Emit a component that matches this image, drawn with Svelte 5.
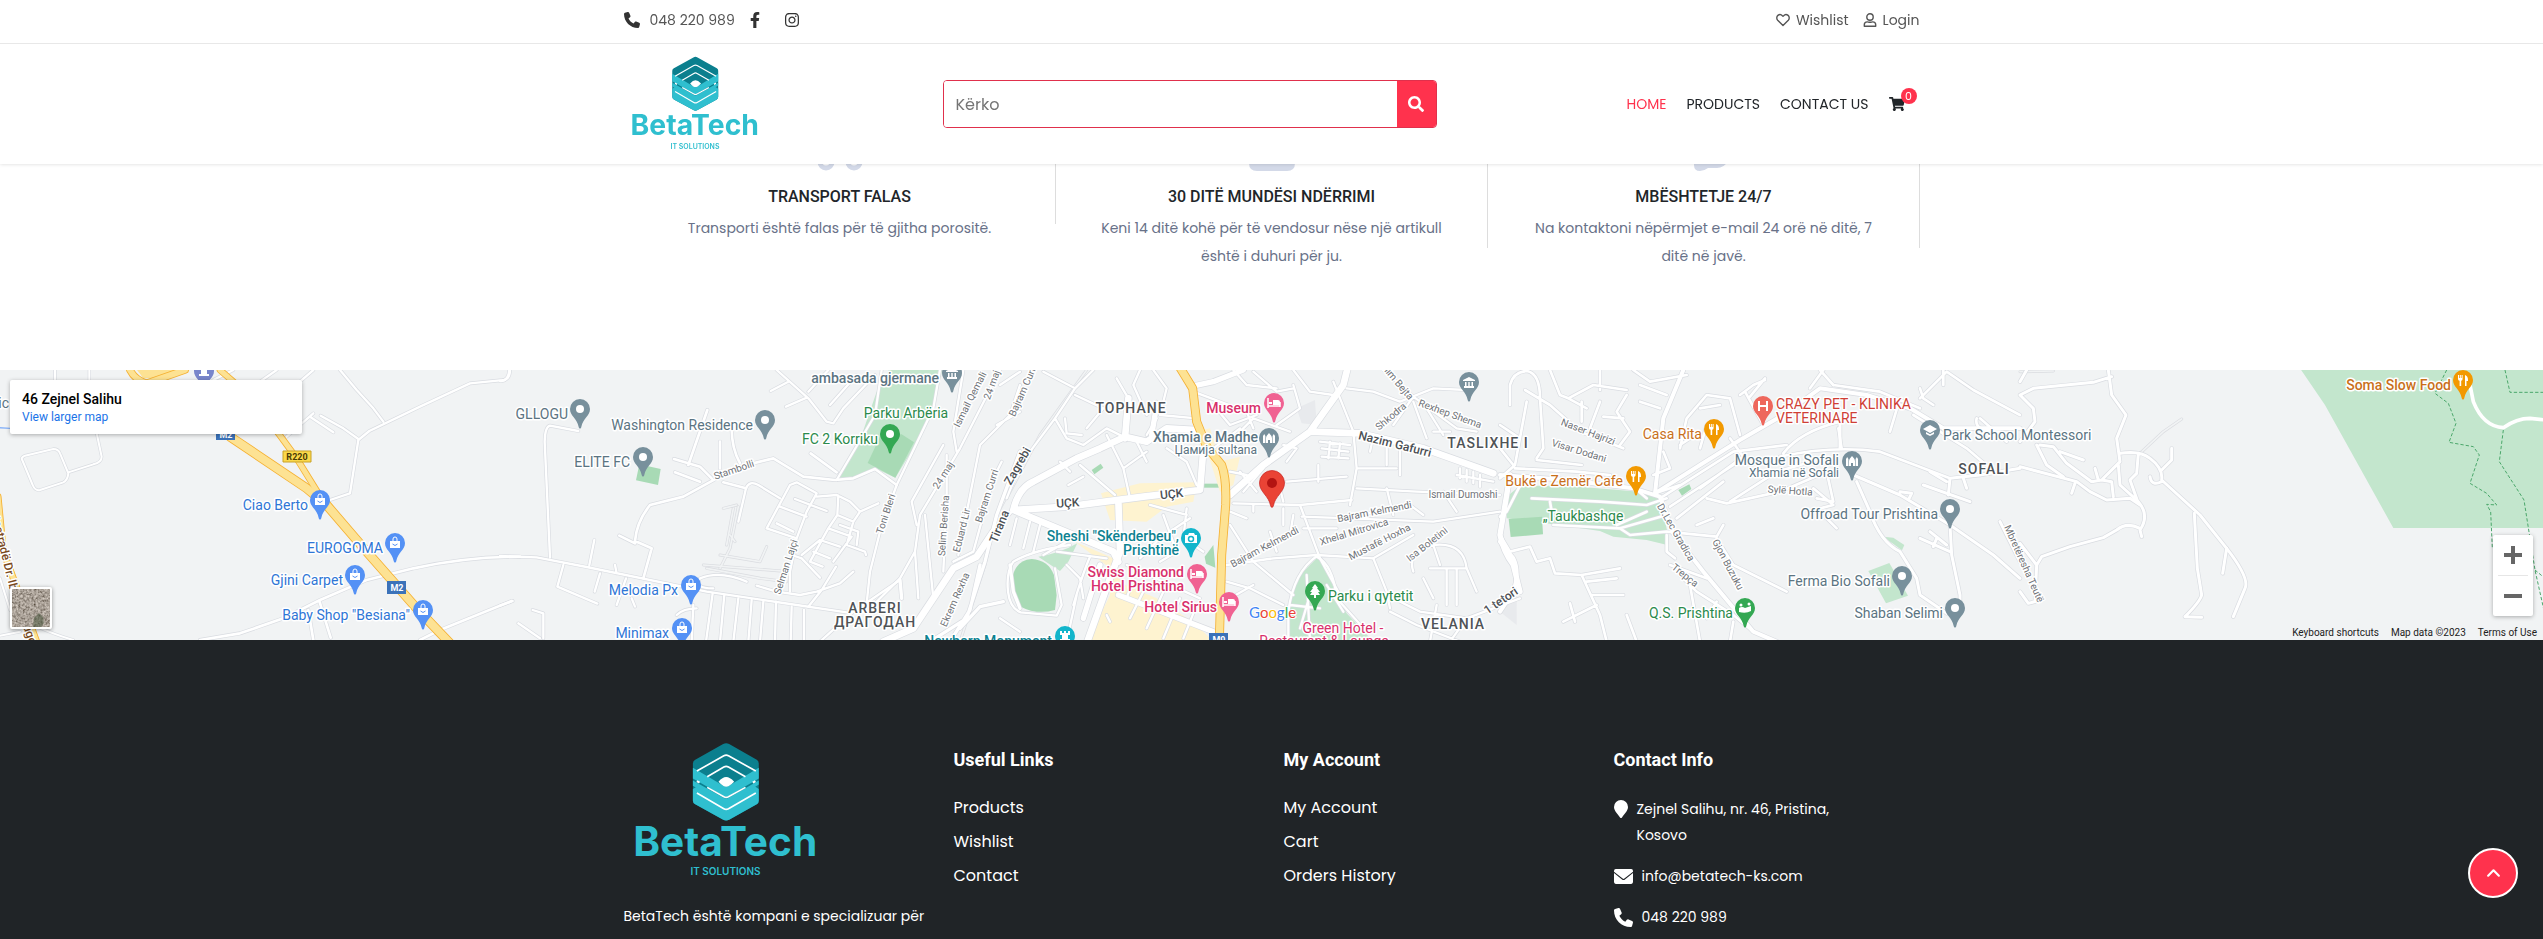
<script>
  const navLinks = ['HOME', 'PRODUCTS', 'CONTACT US'];

  const features = [
    { icon: 'truck', title: 'TRANSPORT FALAS', text: 'Transporti është falas për të gjitha porositë.' },
    { icon: 'calendar', title: '30 DITË MUNDËSI NDËRRIMI', text: 'Keni 14 ditë kohë për të vendosur nëse një artikull është i duhuri për ju.' },
    { icon: 'chat', title: 'MBËSHTETJE 24/7', text: 'Na kontaktoni nëpërmjet e-mail 24 orë në ditë, 7 ditë në javë.' }
  ];

  const linkColumns = [
    { title: 'Useful Links', links: ['Products', 'Wishlist', 'Contact'] },
    { title: 'My Account', links: ['My Account', 'Cart', 'Orders History'] }
  ];

  // Map sheets: each one is drawn at three units per pixel from its own left edge.
  const sheets = [0, 500, 1000, 1500, 2020];
  const place = (s) => `translate(${sheets[s]} -5) scale(0.33333)`;

  const areas = [
    { s: 1, fill: '#c3e6cd', d: 'M1175 0H1330L1306 110 1255 225 1186 338 1130 312 1060 338H1010L1075 240 1130 80z' },
    { s: 1, fill: '#a8dab5', d: 'M1140 215 1205 208 1242 232 1186 338 1103 294z' },
    { s: 1, fill: '#a8dab5', d: 'M418 298 482 312 474 360 408 346z' },
    { s: 2, fill: '#c3e6cd', d: 'M115 575Q180 565 232 535L205 590 180 618 160 605z' },
    { s: 2, fill: '#a8dab5', d: 'M95 582Q145 585 162 630L170 690 165 735Q110 750 62 725 30 700 36 640 48 584 95 582z' },
    { s: 2, fill: '#a8dab5', d: 'M275 315 302 296 310 308 283 328z' },
    { s: 2, fill: '#a8dab5', d: 'M608 356H664V368H608z' },
    { s: 2, fill: '#a8dab5', d: 'M614 575 640 540 646 608 618 596z' },
    { s: 2, fill: '#c3e6cd', d: 'M950 580Q990 600 1000 670L1040 745 1120 830H862L868 720 895 635z' },
    { s: 2, fill: '#fef3d0', d: 'M303 385 420 355 590 352 580 410 500 425 440 470 330 465z' },
    { s: 2, fill: '#fef3d0', d: 'M630 190 660 290 720 275 700 360 660 380 625 270 590 200z' },
    { s: 2, fill: '#fef3d0', d: 'M225 530 340 580 365 655 470 700 585 775 640 830H262L330 690 318 600z' },
    { s: 2, fill: '#e8eaed', d: 'M890 130 945 105 950 180 905 175z' },
    { s: 3, fill: '#c3e6cd', d: 'M20 395 60 362 200 362 420 380 480 400 502 500 502 540 440 525 340 515 300 498 160 478 20 460z' },
    { s: 3, fill: '#a8dab5', d: 'M26 462 126 455 129 508 32 516z' },
    { s: 3, fill: '#a8dab5', d: 'M535 375 568 358 574 372 546 392z' },
    { s: 3, fill: '#c3e6cd', d: 'M1150 515 1180 518 1213 540 1206 556z' },
    { s: 3, fill: '#c3e6cd', d: 'M1105 618 1168 594 1224 692 1158 715z' },
    { s: 3, fill: '#e8eaed', d: 'M0 725 50 690 50 780 0 740z' },
    { s: 4, fill: '#c3e6cd', d: 'M840 10 915 120 1120 489H1575V10z' },
    { s: 0, fill: '#fde293', d: 'M400 0H555L480 40H430z' }
  ];

  const roads = [
    { s: 0, w: 8, d: 'M165 15V45M268 15V45M290 205 305 275Q305 292 280 298L205 322M68 288Q60 278 75 272L160 252Q175 252 180 265L205 325Q203 345 190 352L120 375Q105 378 98 360zM0 640 30 735Q100 790 220 825M0 812 60 800' },
    { s: 0, w: 9, d: 'M1020 15 1070 75 1120 130 1150 170M1530 15Q1530 48 1500 46L1410 55 1260 125 1108 198 1075 225 1050 385 990 405M1075 222 1030 190 962 152M940 145 860 215M930 155 1000 202M780 50 830 15M900 50 940 15M640 45 700 15' },
    { s: 0, w: 10, d: 'M600 825 720 805 850 760 960 705 1100 645 1240 610Q1400 575 1560 575M925 735 940 825M958 708 992 818M1260 825 1320 795 1535 708' },
    { s: 1, w: 9, d: 'M0 48Q25 50 28 15M235 198 150 182Q135 185 134 230L150 577M0 573 110 577 260 606 620 680 850 714 1040 742M283 525 268 600M190 600 172 665 292 716M300 625 284 680M378 640 350 720M345 600 350 625M395 700 405 725M130 820V745L98 735M55 775 120 820M0 722 38 708' },
    { s: 1, w: 10, d: 'M430 640 455 550 405 528Q410 470 450 420L550 395 650 340 720 305 820 280 910 335 1005 345 1060 340 1125 312 1190 360M358 512 405 535M622 135 565 300M522 282 600 305 635 340M525 322 600 350M660 230V310M695 190Q695 250 720 295M932 265 1010 322M670 352 738 370' },
    { s: 1, w: 9, d: 'M640 670Q580 670 600 640 660 615 740 650M580 720 575 830M590 730Q550 730 530 750M638 685 618 830M673 690 660 830M715 700 700 830M755 705 745 830M790 710 780 830M828 710 825 830M875 725 872 830M912 735V830M770 662 830 680 900 690 950 680 1020 655 1060 620M925 725 965 675 1008 605M875 570 905 580 960 638' },
    { s: 1, w: 9, d: 'M715 470 738 370Q748 345 775 360L840 400M800 490 870 360 890 352 950 385 920 440 890 520 870 620V680M800 490 890 520M885 402 980 438M840 425 920 455M830 475 880 500M950 395 1010 390 1050 410 1080 440 1135 415M1015 392 1012 450 985 490 930 590 968 605M1012 450 1060 470 1080 440M985 490 1055 515 1000 590M960 525 1020 545M940 560 990 580M1060 470 1040 540 1095 560 1098 570M1020 480 1075 500 1070 540M905 570 960 525' },
    { s: 1, w: 9, d: 'M830 15 925 100 980 170 1000 175 1030 130 1125 30M812 78 865 50M858 125 920 98M925 80 985 15M990 120 1070 30M1010 345 1125 150 1145 15M1320 15 1300 130 1190 360 1140 500 1110 620 1100 715M1500 15 1380 250 1260 450 1245 560 1200 640 1120 720M1390 15 1360 200 1370 260M1330 240 1235 410 1250 480M1245 560 1255 700M1275 450 1300 700M1340 270V400L1330 620M1560 60 1530 150 1440 240 1375 570M1560 140 1490 180M1505 290 1480 340 1420 560 1360 590' },
    { s: 1, w: 22, d: 'M1150 830 1240 790 1360 610 1430 575 1480 500' },
    { s: 1, w: 9, d: 'M960 830 1060 740 1200 645' },
    { s: 1, w: 12, d: 'M1560 260 1490 450 1455 590 1400 760 1290 830M1200 645 1205 700M1440 600 1410 735 1350 830M1530 600 1540 680 1560 730M1510 710 1440 725 1380 790' },
    { s: 2, w: 9, d: 'M0 60 60 20M130 20 225 70 280 15M225 70 165 160 60 300 20 400M165 160 200 220 250 240 320 190 380 220M195 160 200 205 245 210M225 90 310 130 260 190M350 40 385 100 380 210M460 15 500 70 480 150 590 160M420 15 400 60 440 150 470 110M320 210 370 310 390 400M370 310 440 260M240 300 345 390M205 360 250 335M180 290 210 320M410 230 440 290M500 250 560 290 590 360M440 210 470 160' },
    { s: 2, w: 22, d: 'M40 435 200 425 430 395 600 375 612 230M355 405 360 560M40 435 340 560 355 590M385 100 375 220M40 435Q55 370 100 350L230 280 300 250 375 215 440 230 500 190 590 195M360 560 330 640 262 830M690 390 790 300 930 200 1080 205 1270 250 1480 325M930 200 1030 60 1045 0' },
    { s: 2, w: 18, d: 'M570 65 640 50 730 15M470 120 455 210M1530 330 1500 510Q1510 560 1540 600L1560 680M355 690 640 800M300 600 250 760' },
    { s: 2, w: 9, d: 'M0 480 40 435M50 460 30 540M90 470 70 550M120 480 100 560M210 540Q100 555 40 590 18 620 24 680 30 730 62 742L170 752 185 720 165 610M200 600 240 640 250 700M270 575Q250 620 220 720M130 570 200 530M170 560 320 580M380 600 600 700M420 580 480 520 570 460M450 420 560 450M490 450 530 560 480 590M560 430 550 520 610 560M400 640 380 700M440 660 390 760M490 680 440 790M540 700 490 820M590 720 550 820M230 690 200 830M320 750 330 770M0 760 60 800' },
    { s: 2, w: 9, d: 'M580 80 740 140 760 190M640 120 690 180 770 150M700 15 740 60 830 70M760 20 830 80 880 70M880 15 930 80 1000 90M830 180 900 130 880 60M690 230 760 160 870 200M640 250 720 190M690 320 740 330M860 290 890 250 850 240M790 310 730 380M860 350 1040 335M770 380 720 320M840 370 850 410M700 415 900 420 960 580 1020 690M690 440 740 460M760 420V440M900 420 1055 405M905 455 1050 460 1200 420M910 490 1010 490M690 480 760 590 880 690M680 600 820 580 950 570 1120 580 1240 510M680 650 750 670 850 720M690 700 760 660M850 430V480M880 450 870 510M810 500 830 560' },
    { s: 2, w: 9, d: 'M1000 50 1060 200 1070 310 1050 420M1070 310 1190 310M955 300V350M960 230 1050 240M965 250 1045 260M965 275 1045 280M990 230 985 280M1020 235 1015 280M1120 215 1110 260M1160 230V300M1200 240V330M1040 70 1120 80 1200 110 1300 70 1400 75M1150 15 1240 95 1180 180M1240 95 1370 190 1430 200M1240 110 1280 220M1280 130 1330 210M1300 200H1350M1070 370 1250 380 1500 390M1330 380 1370 440M1370 330 1480 350M1380 310V340M1400 315V350M1420 320V355M1440 330V365M1050 460 1300 470 1500 440M1180 450 1160 370M1230 420 1270 450' },
    { s: 2, w: 9, d: 'M955 570Q880 620 865 740V830M950 575Q1000 600 1010 700L1100 800M1120 580 1160 680 1170 730M1240 620Q1220 560 1300 540 1390 530 1400 610L1430 680M1290 610 1400 610M1300 540 1320 600M1270 640 1300 700M1340 610V720M1370 610V720M1180 700 1260 740 1400 760 1560 700M1170 740 1250 780 1380 830M1310 720 1290 830M1400 760 1350 830M920 630 930 830M870 720 960 730M930 690 900 790M980 660 1030 740' },
    { s: 3, w: 10, d: 'M30 120V60Q40 20 80 18 120 25 120 100L130 250 110 280M75 75 150 120 240 200 370 250M150 15 180 90 205 100 280 60 380 75M80 110 45 300 0 340M45 310 230 320 330 330M110 285 245 300M205 100 260 130M245 110V170M270 190 300 110M300 15V75M380 90 350 140 390 200 360 240M310 155 370 160M400 15 450 50 560 30M420 60 500 90M420 110 480 130M0 180 60 220M0 250 40 300' },
    { s: 3, w: 14, d: 'M550 15 490 160 465 385 600 300 720 225 850 150 960 70 1100 90 1230 130 1330 190 1560 190M0 330 200 345 400 370 480 395 520 505 610 620 760 800 830 830M0 530 40 580Q60 620 40 680L0 740' },
    { s: 3, w: 10, d: 'M690 220 730 275 600 370M465 385 540 360M480 400 700 260 860 240M510 425 700 300M530 460 670 350M490 260 510 310 460 330M540 250 560 160 620 90 690 100 720 210M600 130 660 120M600 250 620 180M540 240 570 220M750 95 795 40M720 90 760 60 795 45M735 80 790 180M930 70 970 15M850 265Q900 200 1020 170M1000 60 960 15M1015 190 1025 250M840 275Q1000 240 1140 260L1350 340' },
    { s: 3, w: 10, d: 'M620 400 680 415 840 380 980 320 1000 410 950 400M690 410 830 320 970 280M940 370 1000 420 960 430M980 460 1010 490M1000 60 1140 80 1260 130M1260 100 1340 20 1420 75 1560 150M1330 15V60M1260 70 1270 100 1300 120M1240 150 1400 250 1470 310M1200 100 1170 200M1430 160Q1420 200 1500 200M1440 160 1520 230' },
    { s: 3, w: 11, d: 'M1060 330 1200 390 1350 480 1480 570 1560 640M1070 350 1110 440Q1140 530 1200 560L1250 640 1260 690 1340 745M1350 480 1355 570 1380 690V740M1350 340 1345 390M1350 340 1440 330 1560 310M1270 360 1410 410M1290 320 1340 350M1390 340 1400 370M1260 520 1350 560M1290 500 1340 540M1310 520 1300 545M1200 380 1235 385 1225 405M1500 470 1560 590M1020 170V250' },
    { s: 3, w: 10, d: 'M160 480 360 490 500 450M95 400 300 410 440 420 500 400M60 362 20 440 0 455M150 410 155 440M400 365 440 400M360 490 390 510 500 500 650 515M350 480 440 440M590 480 640 460M650 515 670 480M500 510V560L525 580M0 510 30 560 90 545 110 590 150 580 165 625 245 630 360 610M260 650 350 640M275 690 370 690M245 630 300 750 320 830M190 770 290 720M210 715 225 770M380 750 410 830M650 520 700 600 860 680M510 600 620 640M570 660 600 830M540 630 590 680 700 750 760 800M700 770 690 830M650 710 620 760' },
    { s: 4, w: 11, d: 'M0 90 40 70 220 52 275 35M265 15 275 90 318 150 290 220 300 290 245 345 215 350M20 15 0 50M0 90 40 130 45 170 0 230M50 240 80 300 130 335M60 240 100 245 140 295 215 350M120 260 190 285M225 310 235 345M245 345 275 350 280 395M300 265Q360 255 390 280 430 310 425 345L540 450 620 550Q690 640 675 670L640 755M455 250V285L425 315M390 335Q395 365 425 350M355 265 350 325 330 345 355 415M295 300 300 360 355 410Q390 450 360 495L365 515' },
    { s: 4, w: 11, d: 'M0 305 170 350 210 380 260 405 330 400 360 420M165 355 155 385M360 490Q320 470 290 495L250 518 150 545 65 575 50 600 45 710 25 715 0 680M0 535 50 600M523 445 532 610 545 690Q540 710 495 755L545 757M620 550 608 625' }
  ];

  const faintRoads = [
    { s: 1, d: 'M715 425 690 550 660 610M670 430 710 420M700 430 680 540M610 600 870 620M660 570 780 590 800 545M690 510 705 530M620 610 780 640 860 650' },
    { s: 4, d: 'M360 265 430 200 485 162M0 20 100 18' },
    { s: 1, d: 'M1555 330 1490 450 1455 600 1380 830' },
    { s: 2, d: 'M260 15 120 210 20 400' }
  ];

  const highways = [
    { s: 0, w: 18, d: 'M390 15Q405 45 440 55L555 15' },
    { s: 0, w: 15, d: 'M660 15 780 120 835 205 890 280 955 385' },
    { s: 0, w: 24, d: 'M560 120 690 215 920 370 980 420 1100 560 1250 730 1350 835' },
    { s: 0, w: 16, d: 'M-6 395 10 560 55 680 110 830' },
    { s: 2, w: 22, d: 'M535 0 578 70 590 170 620 245 665 300Q680 340 677 420L665 570 658 830' }
  ];

  const blue = '#2f76d6', grey = '#5b7482', green = '#2b8a4c', pink = '#d8316c', orange = '#c9701b';

  // x, y: pin centre. tx, ty: label baseline position.
  const pins = [
    { s: 0, x: 961, y: 406, fill: '#5491f5', g: 'bag', label: 'Ciao Berto', tx: 923, ty: 436, c: blue },
    { s: 0, x: 1186, y: 535, fill: '#5491f5', g: 'bag', label: 'EUROGOMA', tx: 1148, ty: 565, c: blue },
    { s: 0, x: 1066, y: 630, fill: '#5491f5', g: 'bag', label: 'Gjini Carpet', tx: 1029, ty: 661, c: blue },
    { s: 0, x: 1268, y: 736, fill: '#5491f5', g: 'bag', label: 'Baby Shop "Besiana"', tx: 1230, ty: 766, c: blue },
    { s: 0, x: 613, y: 18, fill: '#7986cb', g: 'castle' },
    { s: 1, x: 241, y: 132, fill: '#78909c', g: 'dot', label: 'GLLOGU', tx: 203, ty: 163, c: grey },
    { s: 1, x: 430, y: 276, fill: '#78909c', g: 'dot', label: 'ELITE FC', tx: 391, ty: 306, c: grey },
    { s: 1, x: 796, y: 165, fill: '#78909c', g: 'dot', label: 'Washington Residence', tx: 759, ty: 196, c: grey },
    { s: 1, x: 1355, y: 24, fill: '#78909c', g: 'museum', label: 'ambasada gjermane', tx: 1316, ty: 55, c: grey, b: 1 },
    { s: 1, x: 1171, y: 208, fill: '#34a853', g: 'dot', label: 'FC 2 Korriku', tx: 1133, ty: 238, c: green },
    { s: 1, x: 574, y: 660, fill: '#5491f5', g: 'bag', label: 'Melodia Px', tx: 535, ty: 690, c: blue },
    { s: 1, x: 547, y: 789, fill: '#5491f5', g: 'bag', label: 'Minimax', tx: 508, ty: 820, c: blue },
    { s: 2, x: 823, y: 114, fill: '#f06292', g: 'bed', label: 'Museum', tx: 783, ty: 144, c: pink, b: 1 },
    { s: 2, x: 808, y: 219, fill: '#78909c', g: 'mosque', label: 'Xhamia e Madhe', tx: 774, ty: 231, c: grey, b: 1 },
    { s: 2, x: 574, y: 519, fill: '#12b5cb', g: 'camera', label: 'Sheshi "Skënderbeu",', tx: 536, ty: 528, c: '#0d8291', b: 1 },
    { s: 2, x: 592, y: 627, fill: '#f06292', g: 'bed', label: 'Swiss Diamond', tx: 552, ty: 637, c: pink, b: 1 },
    { s: 2, x: 688, y: 711, fill: '#f06292', g: 'bed', label: 'Hotel Sirius', tx: 652, ty: 741, c: pink, b: 1 },
    { s: 2, x: 196, y: 813, fill: '#12b5cb', g: 'castle', label: 'Newborn Monument', tx: 157, ty: 843, c: '#0d8291', b: 1 },
    { s: 2, x: 946, y: 678, fill: '#34a853', g: 'tree', label: 'Parku i qytetit', tx: 985, ty: 709, c: green, a: 'start' },
    { s: 2, x: 1408, y: 51, fill: '#78909c', g: 'museum' },
    { s: 3, x: 643, y: 192, fill: '#f29900', g: 'fork', label: 'Casa Rita', tx: 606, ty: 223, c: orange },
    { s: 3, x: 409, y: 333, fill: '#f29900', g: 'fork', label: 'Bukë e Zemër Cafe', tx: 369, ty: 364, c: orange },
    { s: 3, x: 790, y: 123, fill: '#ee675c', g: 'hospital', label: 'CRAZY PET - KLINIKA', tx: 829, ty: 132, c: '#cf3f36', a: 'start' },
    { s: 3, x: 1291, y: 195, fill: '#78909c', g: 'school', label: 'Park School Montessori', tx: 1329, ty: 225, c: grey, a: 'start' },
    { s: 3, x: 1057, y: 288, fill: '#78909c', g: 'mosque', label: 'Mosque in Sofali', tx: 1018, ty: 300, c: grey },
    { s: 3, x: 1351, y: 432, fill: '#78909c', g: 'dot', label: 'Offroad Tour Prishtina', tx: 1314, ty: 462, c: grey },
    { s: 3, x: 1207, y: 633, fill: '#78909c', g: 'dot', label: 'Ferma Bio Sofali', tx: 1169, ty: 664, c: grey },
    { s: 3, x: 1366, y: 729, fill: '#78909c', g: 'dot', label: 'Shaban Selimi', tx: 1329, ty: 760, c: grey },
    { s: 3, x: 736, y: 729, fill: '#34a853', g: 'golf', label: 'Q.S. Prishtina', tx: 698, ty: 760, c: green },
    { s: 4, x: 1329, y: 45, fill: '#f29900', g: 'fork', label: 'Soma Slow Food', tx: 1292, ty: 76, c: orange, b: 1 }
  ];

  const labels = [
    { s: 0, x: 28, y: 130, t: 'ic', c: grey, a: 'end' },
    { s: 1, x: 1218, y: 160, t: 'Parku Arbëria', c: green },
    { s: 2, x: 772, y: 267, t: 'Џамија sultana', c: grey, z: 12, a: 'end' },
    { s: 2, x: 536, y: 570, t: 'Prishtinë', c: '#0d8291', b: 1, a: 'end' },
    { s: 2, x: 552, y: 679, t: 'Hotel Prishtina', c: pink, b: 1, a: 'end' },
    { s: 2, x: 1028, y: 804, t: 'Green Hotel -', c: pink },
    { s: 2, x: 972, y: 844, t: 'Restaurant & Lounge', c: pink },
    { s: 3, x: 829, y: 174, t: 'VETERINARE', c: '#cf3f36', a: 'start' },
    { s: 3, x: 1018, y: 336, t: 'Xhamia në Sofali', c: grey, z: 12, a: 'end' },
    { s: 3, x: 249, y: 468, t: '„Taukbashqe', c: green }
  ];

  const districts = [
    { s: 2, x: 392, y: 144, t: 'TOPHANE' },
    { s: 2, x: 1463, y: 248, t: 'TASLIXHE I' },
    { s: 2, x: 1359, y: 792, t: 'VELANIA' },
    { s: 3, x: 1452, y: 327, t: 'SOFALI' },
    { s: 1, x: 1124, y: 744, t: 'ARBERI' },
    { s: 1, x: 1126, y: 786, t: 'ДРАГОДАН' }
  ];

  const streets = [
    { s: 0, x: 10, y: 590, r: 76, t: 'Autostradë Dr. Ibrahim', z: 12, c: '#7a4a1c' },
    { s: 0, x: 80, y: 820, r: 70, t: 'Rugova', z: 12, c: '#7a4a1c' },
    { s: 1, x: 705, y: 325, r: -19, t: 'Stambolli' },
    { s: 1, x: 868, y: 608, r: -72, t: 'Selman Lajçi' },
    { s: 1, x: 1168, y: 450, r: -72, t: 'Toni Bleri' },
    { s: 1, x: 1418, y: 108, r: -63, t: 'Ismail Qemali' },
    { s: 1, x: 1486, y: 62, r: -70, t: '24 maj' },
    { s: 1, x: 1338, y: 335, r: -58, t: '24 maj' },
    { s: 1, x: 1340, y: 482, r: -86, t: 'Selim Berisha' },
    { s: 1, x: 1394, y: 497, r: -76, t: 'Eduard Lir' },
    { s: 1, x: 1469, y: 397, r: -72, t: 'Bajram Curri' },
    { s: 1, x: 1374, y: 708, r: -66, t: 'Ekrem Rexha' },
    { s: 1, x: 1510, y: 488, r: -68, t: 'Tirana', z: 12, c: '#4b4f54' },
    { s: 2, x: 64, y: 308, r: -60, t: 'Zagrebi', z: 12, c: '#4b4f54' },
    { s: 2, x: 78, y: 82, r: -66, t: 'Bajram Curri' },
    { s: 2, x: 205, y: 427, r: -4, t: 'UÇK', z: 12, c: '#4b4f54' },
    { s: 2, x: 516, y: 400, r: -6, t: 'UÇK', z: 12, c: '#4b4f54' },
    { s: 2, x: 799, y: 554, r: -28, t: 'Bajram Kelmendi' },
    { s: 2, x: 1125, y: 450, r: -11, t: 'Bajram Kelmendi' },
    { s: 2, x: 1066, y: 510, r: -17, t: 'Xhelal Mitrovica' },
    { s: 2, x: 1142, y: 540, r: -27, t: 'Mustafë Hoxha' },
    { s: 2, x: 1288, y: 546, r: -38, t: 'Isa Boletini' },
    { s: 2, x: 1390, y: 398, r: 0, t: 'Ismail Dumoshi' },
    { s: 2, x: 1182, y: 250, r: 14, t: 'Nazim Gafurri', z: 12, c: '#4b4f54' },
    { s: 2, x: 1178, y: 162, r: -40, t: 'Shkodra' },
    { s: 2, x: 1348, y: 156, r: 20, t: 'Rexhep Shema' },
    { s: 2, x: 1170, y: 40, r: 50, t: 'Ibrahim Bejta' },
    { s: 2, x: 1508, y: 716, r: -34, t: '1 tetori', z: 12, c: '#4b4f54' },
    { s: 3, x: 262, y: 210, r: 21, t: 'Naser Hajrizi' },
    { s: 3, x: 234, y: 268, r: 17, t: 'Visar Dodani' },
    { s: 3, x: 870, y: 388, r: 4, t: 'Sylë Hotla' },
    { s: 3, x: 520, y: 508, r: 60, t: 'Dr.Lec Gradica' },
    { s: 3, x: 674, y: 604, r: 62, t: 'Gjon Buzuku' },
    { s: 3, x: 550, y: 640, r: 38, t: 'Trepça' },
    { s: 3, x: 1562, y: 600, r: 66, t: 'Mbretëresha Teutë' }
  ];

  const X = (o) => Math.round(sheets[o.s] + (o.tx ?? o.x) / 3);
  const Y = (o) => Math.round((o.ty ?? o.y) / 3 - 5);
  const pinAt = (p) => `translate(${Math.round(sheets[p.s] + p.x / 3)} ${Math.round(p.y / 3 - 5)})`;

  let term = $state('');
</script>

{#snippet logo()}
  <svg class="logo" viewBox="0 0 550 405" role="img" aria-label="BetaTech IT Solutions">
    <g transform="translate(-100 -65)">
      <path fill="#0b7f8e" d="M368 71q9-5 18 0l83 47q6 4 6 11v112q0 7-6 11l-83 46q-9 5-18 0l-84-46q-7-4-7-11V129q0-7 7-11z" />
      <path fill="#2fbfcf" d="M277 142l92 54q8 5 16 0l90-54v32l-90 53q-8 5-16 0l-92-53z" />
      <path fill="#2fbfcf" d="M277 206l20-12 80 45 80-45 18 12v35q0 7-6 11l-83 46q-9 5-18 0l-84-46q-7-4-7-11z" />
      <path fill="#2fbfcf" d="M277 180l92 52q8 5 16 0l90-52v12l-90 60q-8 5-16 0l-92-56z" />
      <path fill="#fff" d="M354 184q12-14 23-14t24 14q-10 10-16 13-8 4-16 0-6-3-15-13z" />
      <path fill="none" stroke="#fff" stroke-width="5" d="M289 152l81-46q7-4 14 0l82 46M320 169l50-29q7-4 14 0l51 29M320 201l50 28q7 4 14 0l51-28M289 218l81 47q7 4 14 0l82-47" />
      <path fill="none" stroke="#fff" stroke-width="6" d="M289 182l8 5M457 187l8-5" />
      <text x="374" y="407" text-anchor="middle" font-size="122" font-weight="700" fill="#2fbfcf">BetaTech</text>
      <text x="375" y="465" text-anchor="middle" font-size="30" font-weight="600" fill="#2fbfcf">IT SOLUTIONS</text>
    </g>
  </svg>
{/snippet}

{#snippet phone(cls)}
  <svg class={cls} viewBox="0 0 512 512" aria-hidden="true"><path fill="currentColor" d="M164.9 24.6c-7.7-18.6-28-28.5-47.4-23.2l-88 24C12.1 30.2 0 46 0 64C0 311.4 200.6 512 448 512c18 0 33.8-12.1 38.6-29.5l24-88c5.3-19.4-4.6-39.7-23.2-47.4l-96-40c-16.3-6.8-35.2-2.1-46.3 11.6L304.7 368C234.3 334.7 177.3 277.7 144 207.3L193.3 167c13.7-11.2 18.4-30 11.6-46.3l-40-96z" /></svg>
{/snippet}

{#snippet glyph(g)}
  {#if g === 'dot'}
    <circle r="4" fill="#fff" />
  {:else if g === 'bag'}
    <path fill="#fff" d="M-5-2H5V5H-5z" /><path fill="none" stroke="#fff" d="M-2-2v-2a2 2 0 0 1 4 0v2" /><path fill="none" stroke="#5491f5" d="M-2.500 1q2.500 3 5 0" />
  {:else if g === 'bed'}
    <path fill="none" stroke="#fff" stroke-width="1.500" d="M-6-5v10M-6 3h12M6 4V-1" /><path fill="#fff" d="M-1-3h5q2 0 2 2v3h-7zM-5-1h3v2h-3z" />
  {:else if g === 'museum'}
    <path fill="#fff" d="M-6-2 0-5 6-2v1H-6zM-5 4H5v2H-5zM-4 0h1.500v4H-4zM-.7 0H.7v4H-.7zM2.500 0H4v4H2.500z" />
  {:else if g === 'mosque'}
    <path fill="#fff" d="M-6 5v-7l1.200-2 1.200 2v7zM3.600 5v-7l1.200-2 1.200 2v7zM-3 5V0q0-2 3-5 3 3 3 5v5H1V2h-2v3z" />
  {:else if g === 'fork'}
    <path fill="#fff" d="M-5-5h1v3h.8v-3h1v3h.8v-3h1v4q0 1.500-1.400 1.800V6h-1.600V.8Q-5 .5-5-1zM2 6V-5q3 1 3 5v1H3.500v5z" />
  {:else if g === 'tree'}
    <path fill="#fff" d="M0-7 3-3H2L5 1H3l2 3H1v3h-2V4h-4l2-3h-2l3-4h-1z" />
  {:else if g === 'hospital'}
    <path fill="none" stroke="#fff" stroke-width="2" d="M-4-5V5M4-5V5M-4 0H4" />
  {:else if g === 'school'}
    <path fill="#fff" d="M-7-1 0-5 7-1 0 3zM-4 2l4 2.300L4 2v2L0 6-4 4z" />
  {:else if g === 'camera'}
    <path fill="#fff" d="M-6-3h3l1-2h5l1 2h2v8H-6z" /><circle cy="1" r="2.500" fill="none" stroke="#12b5cb" stroke-width="1.500" />
  {:else if g === 'golf'}
    <circle cx="-4" cy="-3" r="1.500" fill="#fff" /><circle cx="4" cy="-4" r="1.500" fill="#fff" /><path fill="#fff" d="M-6 0q3-2 6 0l6-2v5q-5 3-12 1z" />
  {:else}
    <path fill="#fff" d="M-5-5h2v2h2v-2h2v2h2v-2h2v4H3v4h2v2H-5V3h2v-4h-2z" />
  {/if}
{/snippet}

<header class="site-header">
  <div class="top-bar">
    <div class="container row">
      <div class="contact">
        <a class="call" href="#call">{@render phone('i16')}<span>048 220 989</span></a>
        <a href="#facebook" aria-label="Facebook"><svg class="fb" viewBox="0 0 320 512"><path fill="currentColor" d="M279.140 288l14.220-92.660h-88.910v-60.130c0-25.350 12.420-50.060 52.240-50.060h40.420V6.260S260.430 0 225.360 0c-73.220 0-121.080 44.380-121.080 124.720v70.620H22.890V288h81.390v224h100.170V288z" /></svg></a>
        <a class="insta" href="#instagram" aria-label="Instagram"><svg class="i16" viewBox="0 0 448 512"><path fill="currentColor" d="M224.100 141c-63.600 0-114.900 51.300-114.900 114.900s51.300 114.900 114.900 114.900S339 319.500 339 255.900 287.700 141 224.100 141zm0 189.600c-41.100 0-74.700-33.500-74.700-74.700s33.500-74.700 74.700-74.700 74.700 33.500 74.700 74.700-33.600 74.700-74.700 74.700zm146.400-194.300c0 14.900-12 26.800-26.800 26.800-14.900 0-26.800-12-26.800-26.800s12-26.800 26.800-26.800 26.800 12 26.800 26.800zm76.100 27.200c-1.700-35.900-9.900-67.700-36.200-93.900-26.200-26.200-58-34.400-93.900-36.200-37-2.100-147.900-2.100-184.900 0-35.800 1.700-67.600 9.900-93.900 36.100s-34.400 58-36.200 93.900c-2.100 37-2.100 147.900 0 184.900 1.700 35.900 9.900 67.700 36.200 93.900s58 34.400 93.900 36.200c37 2.100 147.900 2.100 184.900 0 35.900-1.700 67.700-9.900 93.900-36.200 26.200-26.200 34.400-58 36.200-93.900 2.100-37 2.100-147.800 0-184.800zM398.800 388c-7.800 19.600-22.900 34.700-42.600 42.600-29.500 11.700-99.500 9-132.100 9s-102.700 2.600-132.100-9c-19.600-7.800-34.700-22.900-42.600-42.600-11.700-29.500-9-99.500-9-132.100s-2.600-102.700 9-132.100c7.800-19.600 22.900-34.700 42.600-42.600 29.500-11.700 99.500-9 132.100-9s102.700-2.600 132.100 9c19.600 7.800 34.700 22.900 42.600 42.600 11.700 29.500 9 99.500 9 132.100s2.700 102.700-9 132.100z" /></svg></a>
      </div>
      <div class="account">
        <a href="#wishlist"><svg class="i14" viewBox="0 0 14 14" aria-hidden="true"><path fill="none" stroke="currentColor" stroke-width="1.400" stroke-linejoin="round" d="M7 12.500 1.700 7.200C.4 5.800.5 3.600 1.900 2.400 3.300 1.200 5.200 1.400 6.400 2.700L7 3.300l.6-.6C8.800 1.400 10.700 1.200 12.100 2.400c1.400 1.200 1.500 3.400.2 4.800z" /></svg>Wishlist</a>
        <a href="#login"><svg class="i14" viewBox="0 0 14 14" aria-hidden="true"><g fill="none" stroke="currentColor" stroke-width="1.400"><circle cx="7" cy="4" r="3.200" /><path stroke-linejoin="round" d="M1.300 13.200v-1.400c0-1.700 1.300-2.900 3-2.900.8 0 1.400.4 2.700.4s1.900-.4 2.700-.4c1.700 0 3 1.200 3 2.900v1.400z" /></g></svg>Login</a>
      </div>
    </div>
  </div>
  <div class="container row main-bar">
    <a class="brand" href="#home">{@render logo()}</a>
    <form class="search" onsubmit={(e) => e.preventDefault()}>
      <input type="text" aria-label="Kërko" placeholder="Kërko" bind:value={term} />
      <button aria-label="Search"><svg class="i16" viewBox="0 0 512 512"><path fill="currentColor" d="M505 442.700L405.300 343c-4.500-4.500-10.600-7-17-7H372c27.600-35.300 44-79.700 44-128C416 93.100 322.900 0 208 0S0 93.100 0 208s93.100 208 208 208c48.300 0 92.700-16.400 128-44v16.300c0 6.400 2.500 12.500 7 17l99.700 99.700c9.400 9.400 24.600 9.400 33.900 0l28.300-28.300c9.400-9.400 9.400-24.600.1-34zM208 336c-70.700 0-128-57.200-128-128 0-70.700 57.200-128 128-128 70.700 0 128 57.200 128 128 0 70.700-57.200 128-128 128z" /></svg></button>
    </form>
    <nav>
      {#each navLinks as item, i}
        <a href="#{item.toLowerCase().replace(' ', '-')}" class:active={i === 0}>{item}</a>
      {/each}
      <a class="cart" href="#cart" aria-label="Cart">
        <svg class="i16" viewBox="0 0 576 512"><path fill="currentColor" d="M528.120 301.319l47.273-208C578.806 78.301 567.391 64 551.990 64H159.208l-9.166-44.810C147.758 8.021 137.930 0 126.529 0H24C10.745 0 0 10.745 0 24v16c0 13.255 10.745 24 24 24h69.883l70.248 343.435C147.325 417.100 136 435.222 136 456c0 30.928 25.072 56 56 56s56-25.072 56-56c0-15.674-6.447-29.835-16.824-40h209.647C430.447 426.165 424 440.326 424 456c0 30.928 25.072 56 56 56s56-25.072 56-56c0-22.172-12.888-41.332-31.579-50.405l5.517-24.276c3.413-15.018-8.002-29.319-23.403-29.319H218.117l-6.545-32h293.145c11.206 0 20.920-7.754 23.403-18.681z" /></svg>
        <span class="badge">0</span>
      </a>
    </nav>
  </div>
</header>

<main>
  <section class="container features">
    {#each features as f}
      <article class="feature">
        <svg class="f-icon" viewBox="0 0 50 50" aria-hidden="true">
          {#if f.icon === 'truck'}
            <path d="M0 8h30v28H0zM32 16h10l8 10v10H32z" fill="#d3d9e8" />
            <g fill="#fff" stroke="#d3d9e8" stroke-width="5"><circle cx="11" cy="41" r="6" /><circle cx="39" cy="41" r="6" /></g>
          {:else if f.icon === 'calendar'}
            <path d="M2 8h46v34q0 8-8 8H10q-8 0-8-8z" fill="#d3d9e8" />
          {:else}
            <path d="M15 8h34v32q-4 7-11 7H29q-4 3-8 3-6 0-6-6z" fill="#d3d9e8" />
          {/if}
        </svg>
        <h3>{f.title}</h3>
        <p>{f.text}</p>
      </article>
    {/each}
  </section>

  <section class="map" aria-label="Map">
    <svg class="canvas" viewBox="0 0 2543 270" preserveAspectRatio="xMidYMid slice">
      {#each areas as a}<path transform={place(a.s)} fill={a.fill} d={a.d} />{/each}
      <g fill="none" stroke-linecap="round" stroke-linejoin="round">
        {#each faintRoads as r}<path transform={place(r.s)} stroke="#dadce0" stroke-width="9" d={r.d} />{/each}
        {#each faintRoads as r}<path transform={place(r.s)} stroke="#f1f3f4" stroke-width="5" d={r.d} />{/each}
        {#each roads as r}<path transform={place(r.s)} stroke="#d9dce1" stroke-width={r.w + 2} d={r.d} />{/each}
        {#each roads as r}<path transform={place(r.s)} stroke="#fff" stroke-width={r.w - 2} d={r.d} />{/each}
        {#each highways as r}<path transform={place(r.s)} stroke="#f5b133" stroke-width={r.w + 5} d={r.d} />{/each}
        {#each highways as r}<path transform={place(r.s)} stroke="#fde293" stroke-width={r.w} d={r.d} />{/each}
        <path transform={place(4)} stroke="#fff" stroke-width="11" d="M1350 60 1360 110Q1390 185 1450 188 1490 160 1530 160L1575 165" />
        <g transform={place(4)} stroke="#4aa76a" stroke-width="3" stroke-dasharray="10 6" stroke-linecap="butt">
          <path d="M1280 15 1245 85 1285 115 1308 175 1287 232 1360 245 1378 270 1350 355 1400 385 1430 420 1400 418 1412 440 1417 550M1455 15 1470 82H1575M1450 195 1438 290 1512 405 1530 520 1545 615 1575 750M1545 615 1575 640" />
        </g>
        <path transform={place(0)} stroke="#8ab4f8" stroke-width="4" d="M-5 188 30 190" />
      </g>
      <g class="shield">
        <path fill="#3b72b9" d="M216 57h19v13h-19zM387 211h19v13h-19zM1209 263h19v13h-19z" />
        <path fill="#fbd84a" stroke="#c9a227" d="M283 81h28v11h-28z" />
        <text x="226" y="68" fill="#fff">M2</text>
        <text x="397" y="221" fill="#fff">M2</text>
        <text x="1219" y="273" fill="#fff">M9</text>
        <text x="297" y="90" fill="#4a3c05">R220</text>
      </g>
      <g class="street">
        {#each streets as t}
          <text transform="translate({X(t)} {Y(t)}) rotate({t.r})" font-size={t.z ?? 10} fill={t.c ?? '#6f7378'} font-weight={t.z ? 500 : 400}>{t.t}</text>
        {/each}
      </g>
      <g class="district">
        {#each districts as t}<text x={X(t)} y={Y(t)}>{t.t}</text>{/each}
      </g>
      <g class="poi">
        {#each labels as t}
          <text x={X(t)} y={Y(t)} fill={t.c} font-size={t.z ?? 14} text-anchor={t.a ?? 'middle'} font-weight={t.b ? 500 : 400}>{t.t}</text>
        {/each}
        {#each pins as p}
          {#if p.label}<text x={X(p)} y={Y(p)} fill={p.c} font-size="14" text-anchor={p.a ?? 'end'} font-weight={p.b ? 500 : 400}>{p.label}</text>{/if}
          <g transform={pinAt(p)}>
            <path fill={p.fill} d="M-10 0a10 10 0 0 1 20 0C10 7 3 9 1.300 18 .8 20-.8 20-1.300 18-3 9-10 7-10 0z" />
            {@render glyph(p.g)}
          </g>
        {/each}
        <g transform="translate(1272 114)">
          <path fill="#ea4335" stroke="#c5221f" stroke-width=".7" d="M-12.500-1a12.500 12.500 0 0 1 25 0C12.500 8 3 12 1.500 21.500.8 24-.8 24-1.500 21.500-3 12-12.500 8-12.500-1z" />
          <circle cy="-1" r="5" fill="#b31412" />
        </g>
        <text class="google" x="1249" y="248"><tspan fill="#4285f4">G</tspan><tspan fill="#ea4335">o</tspan><tspan fill="#fbbc04">o</tspan><tspan fill="#4285f4">g</tspan><tspan fill="#34a853">l</tspan><tspan fill="#ea4335">e</tspan></text>
      </g>
    </svg>
    <div class="place-card">
      <strong>46 Zejnel Salihu</strong>
      <a href="#map">View larger map</a>
    </div>
    <button class="satellite" aria-label="Show satellite imagery">
      <svg viewBox="0 0 38 38">
        <filter id="ground"><feTurbulence type="fractalNoise" baseFrequency=".45" numOctaves="3" seed="4" /><feColorMatrix values=".8 0 0 0 0 .75 0 0 0 -.02 .7 0 0 0 -.04 0 0 0 0 1" /></filter>
        <rect width="38" height="38" filter="url(#ground)" />
        <path fill="#3f4f35" opacity=".5" d="M22 29l5-5 4 4 1 6-3 4h-8z" />
      </svg>
    </button>
    <div class="zoom">
      <button aria-label="Zoom in"><svg viewBox="0 0 18 18"><path fill="#666" d="M7 0h4v7h7v4h-7v7H7v-7H0V7h7z" /></svg></button>
      <button aria-label="Zoom out"><svg viewBox="0 0 18 18"><path fill="#666" d="M0 7h18v4H0z" /></svg></button>
    </div>
    <div class="credits"><a href="#keys">Keyboard shortcuts</a><span>Map data ©2023</span><a href="#terms">Terms of Use</a></div>
  </section>
</main>

<footer>
  <div class="container columns">
    <div class="about">
      {@render logo()}
      <p>BetaTech është kompani e specializuar për</p>
    </div>
    {#each linkColumns as col}
      <div>
        <h4>{col.title}</h4>
        <ul>
          {#each col.links as l}<li><a href="#{l.toLowerCase().replace(' ', '-')}">{l}</a></li>{/each}
        </ul>
      </div>
    {/each}
    <address>
      <h4>Contact Info</h4>
      <div class="info place">
        <svg viewBox="0 0 14 18" aria-hidden="true"><path fill="currentColor" d="M7 0a7 7 0 0 1 7 7c0 4-4 7-6 10.500q-1 1-2 0C4 14 0 11 0 7a7 7 0 0 1 7-7z" /></svg>
        <span>Zejnel Salihu, nr. 46, Pristina, Kosovo</span>
      </div>
      <div class="info">
        <svg viewBox="0 0 18 14" aria-hidden="true"><path fill="currentColor" d="M0 1.700Q0 0 1.700 0h14.600Q18 0 18 1.700v.8L9.800 9q-.8.600-1.600 0L0 2.500zM0 3.800l7.600 6q1.400 1 2.800 0L18 3.800v8.500q0 1.700-1.700 1.700H1.700Q0 14 0 12.300z" /></svg>
        <span>info@betatech-ks.com</span>
      </div>
      <div class="info">
        {@render phone('')}
        <span>048 220 989</span>
      </div>
    </address>
  </div>
</footer>

<button class="to-top" aria-label="Back to top"><svg viewBox="0 0 14 14"><path fill="none" stroke="#fff" stroke-width="2" stroke-linecap="round" stroke-linejoin="round" d="M2 9l5-5 5 5" /></svg></button>

<style>
  :global(body) { margin: 0; background: #fff; font-family: Poppins, Inter, sans-serif; font-size: 14px; color: #212529; overflow: hidden; }
  :global(html), :global(body), :global(#app) { height: 100%; }
  * { box-sizing: border-box; }
  a { color: inherit; text-decoration: none; }
  button { border: 0; padding: 0; cursor: pointer; }
  svg { display: block; }
  h3, h4, p, ul { margin: 0; padding: 0; }
  li { list-style: none; }

  .container { max-width: 1320px; margin: 0 auto; padding: 0 12px; }
  .row { display: flex; align-items: center; justify-content: space-between; }
  .i16 { width: 16px; height: 16px; }
  .i14 { width: 14px; height: 14px; }

  .site-header { position: fixed; inset: 0 0 auto; z-index: 10; background: #fff; box-shadow: 0 0 4px rgba(0, 0, 0, .16); }
  .top-bar { border-bottom: 1px solid #e8e8e8; color: #333; }
  .top-bar .row { height: 43px; padding-bottom: 3px; }
  .contact, .account { display: flex; align-items: center; }
  .call { display: flex; gap: 10px; margin-right: 15px; }
  .call span, .account a { color: #555; line-height: 16px; }
  .fb { width: 10px; height: 16px; }
  .insta { margin-left: 24px; }
  .account { gap: 14px; }
  .account a { display: flex; align-items: center; gap: 6px; }
  .main-bar { height: 120px; }
  .brand { flex: 0 0 319px; padding-bottom: 3px; }
  .brand .logo { width: 142px; height: 94px; }
  .logo { font-family: Inter, sans-serif; }
  .search { display: flex; width: 494px; height: 48px; border: 1px solid #e0304c; border-radius: 4px; overflow: hidden; }
  .search input { flex: 1; min-width: 0; border: 0; outline: 0; padding: 0 12px; font: inherit; font-size: 16px; background: #fff; }
  .search input::placeholder { color: #757575; }
  .search button { width: 39px; display: grid; place-items: center; background: #ff324d; color: #fff; }
  nav { display: flex; align-items: center; gap: 20px; margin-left: auto; }
  nav .active { color: #ff324d; }
  .cart { position: relative; padding-right: 15px; }
  .badge { position: absolute; top: -8px; right: 3px; width: 16px; height: 16px; border-radius: 50%; background: #ff324d; color: #fff; font-size: 11px; line-height: 16px; text-align: center; }

  .features { display: grid; grid-template-columns: repeat(3, 1fr); align-items: start; padding-top: 121px; height: 370px; }
  .feature { position: relative; text-align: center; padding: 0 20px; }
  .feature::after { content: ''; position: absolute; top: 0; right: 0; height: 85%; border-right: 1px solid #ddd; }
  .f-icon { width: 50px; height: 50px; margin: 0 auto 16px; }
  .feature h3 { font: 500 16px/20px Roboto, sans-serif; margin-bottom: 7px; }
  .feature p { color: #687188; line-height: 28px; max-width: 352px; margin: 0 auto; }

  .map { position: relative; height: 270px; background: #f1f3f4; overflow: hidden; font-family: Roboto, sans-serif; }
  .canvas { width: 100%; height: 100%; }
  .canvas text { paint-order: stroke; stroke: #fff; stroke-width: 3px; stroke-linejoin: round; }
  .canvas .shield text { font-size: 9px; font-weight: 700; stroke: none; text-anchor: middle; }
  .street text { text-anchor: middle; }
  .district text { text-anchor: middle; font-size: 14px; font-weight: 500; letter-spacing: 1px; fill: #4f5357; }
  .canvas .google { font: 400 15px Lato, sans-serif; stroke-width: 2px; }
  .place-card { position: absolute; left: 10px; top: 10px; width: 292px; height: 54px; padding: 10px 12px; background: #fff; border-radius: 2px; box-shadow: 0 1px 4px rgba(0, 0, 0, .3); display: flex; flex-direction: column; color: #000; }
  .place-card strong { font-weight: 500; font-size: 14px; line-height: 18px; }
  .place-card a { color: #1a73e8; font-size: 12px; line-height: 18px; }
  .satellite { position: absolute; left: 10px; bottom: 11px; width: 42px; height: 42px; border: 2px solid #fff; border-radius: 2px; overflow: hidden; box-shadow: 0 1px 4px rgba(0, 0, 0, .4); }
  .satellite svg { width: 38px; height: 38px; }
  .zoom { position: absolute; right: 10px; bottom: 24px; width: 40px; background: #fff; border-radius: 2px; box-shadow: 0 1px 4px rgba(0, 0, 0, .3); }
  .zoom button { display: grid; place-items: center; width: 30px; height: 40px; margin: 0 5px; background: none; }
  .zoom button + button { border-top: 1px solid #e6e6e6; height: 41px; }
  .zoom svg { width: 18px; height: 18px; }
  .credits { position: absolute; right: 0; bottom: 0; display: flex; gap: 12px; padding: 0 6px; font-size: 10px; line-height: 14px; color: #222; }

  footer { background: #202427; color: #fff; min-height: calc(100vh - 640px); padding-top: 102px; }
  .columns { display: grid; grid-template-columns: repeat(4, 1fr); column-gap: 24px; max-width: 1344px; padding: 0 24px; }
  .about .logo { width: 183px; height: 135px; margin-left: 10px; }
  .about p { line-height: 28px; margin-top: 25px; white-space: nowrap; }
  h4 { font: 700 18px/22px Roboto, sans-serif; padding-top: 7px; margin-bottom: 25px; }
  li { font-size: 16px; line-height: 24px; margin-bottom: 10px; }
  address { font-style: normal; }
  .info { display: flex; align-items: center; gap: 9px; line-height: 26px; margin-bottom: 15px; }
  .info svg { width: 19px; height: 19px; }
  .place { align-items: flex-start; max-width: 240px; }
  .place svg { width: 14px; height: 18px; margin-top: 4px; flex: none; }

  .to-top { position: fixed; right: 25px; bottom: 41px; width: 50px; height: 50px; border-radius: 50%; border: 2px solid #fff; background: #ff324d; display: grid; place-items: center; z-index: 9; }
  .to-top svg { width: 15px; height: 15px; }
</style>
